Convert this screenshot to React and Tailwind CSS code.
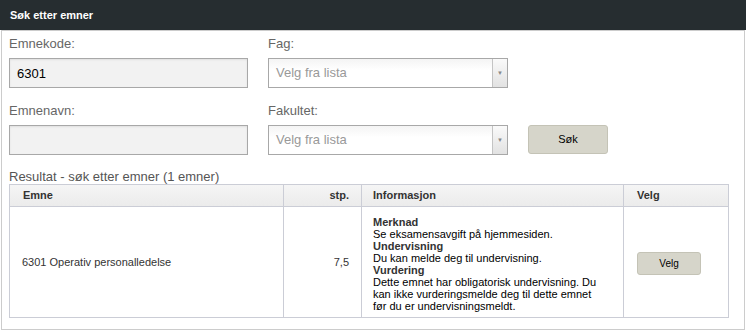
import { useState } from "react";

function Field({ label, children }) {
  return (
    <div className="flex flex-col">
      <label className="text-[13px] leading-[16px] text-[#666] mb-[6px]">{label}</label>
      {children}
    </div>
  );
}

function TextInput({ value }) {
  return (
    <input
      defaultValue={value}
      className="h-[30px] w-[239px] border border-[#a8a8a8] bg-[#f2f2f2] px-[7px] text-[13px] text-black outline-none shadow-[inset_0_1px_2px_rgba(0,0,0,0.08)]"
    />
  );
}

function Select({ placeholder }) {
  return (
    <div className="flex h-[30px] w-[240px] border border-[#a8a8a8] bg-gradient-to-b from-[#f4f4f4] to-white to-[40%]">
      <div className="flex flex-1 items-center px-[7px] text-[13px] text-[#999]">{placeholder}</div>
      <div className="flex w-[15px] items-center justify-center border-l border-[#c4c4c4] bg-gradient-to-b from-[#fafafa] to-[#e2e2e2]">
        <span className="text-[6px] leading-none text-[#888]">▼</span>
      </div>
    </div>
  );
}

export default function App() {
  const [rows] = useState([
    {
      emne: "6301 Operativ personalledelse",
      stp: "7,5",
      info: [
        { title: "Merknad", text: "Se eksamensavgift på hjemmesiden." },
        { title: "Undervisning", text: "Du kan melde deg til undervisning." },
        {
          title: "Vurdering",
          text: "Dette emnet har obligatorisk undervisning. Du kan ikke vurderingsmelde deg til dette emnet før du er undervisningsmeldt.",
        },
      ],
    },
  ]);

  return (
    <div className="h-[330px] w-[746px] bg-white font-['Liberation_Sans',Arial,sans-serif]">
      <div className="flex h-[30px] items-center bg-[#262d30] px-[10px] text-[11px] font-bold text-white">
        Søk etter emner
      </div>
      <div className="ml-px w-[744px] border-x border-b border-t border-[#cccccc] pb-[11px] pl-[7px] pt-[5px]">
        <div className="flex gap-[20px]">
          <Field label="Emnekode:">
            <TextInput value="6301" />
          </Field>
          <Field label="Fag:">
            <Select placeholder="Velg fra lista" />
          </Field>
        </div>
        <div className="mt-[15px] flex items-end gap-[20px]">
          <Field label="Emnenavn:">
            <TextInput value="" />
          </Field>
          <Field label="Fakultet:">
            <Select placeholder="Velg fra lista" />
          </Field>
          <button className="mb-px h-[29px] w-[80px] rounded-[3px] border border-[#c4c3b6] bg-[#d6d5ca] text-[11px] text-black">
            Søk
          </button>
        </div>

        <div className="mt-[14px] text-[13px] leading-[15px] text-[#555]">
          Resultat - søk etter emner (1 emner)
        </div>
        <table className="w-[719px] table-fixed border-collapse text-[11px] text-[#333]">
          <colgroup>
            <col className="w-[274px]" />
            <col className="w-[78px]" />
            <col className="w-[262px]" />
            <col className="w-[105px]" />
          </colgroup>
          <thead>
            <tr className="h-[22px] bg-gradient-to-b from-[#f5f5f5] to-[#ebebeb]">
              <th className="border border-[#cbcdd6] px-[13px] text-left font-bold">Emne</th>
              <th className="border border-[#cbcdd6] px-[12px] text-right font-bold">stp.</th>
              <th className="border border-[#cbcdd6] px-[11px] text-left font-bold">Informasjon</th>
              <th className="border border-[#cbcdd6] px-[13px] text-left font-bold">Velg</th>
            </tr>
          </thead>
          <tbody>
            {rows.map((row, idx) => (
              <tr key={idx}>
                <td className="border border-[#cbcdd6] px-[12px] align-middle">{row.emne}</td>
                <td className="border border-[#cbcdd6] px-[12px] text-right align-middle">{row.stp}</td>
                <td className="border border-[#cbcdd6] pb-[5px] pl-[11px] pr-[21px] pt-[9px] align-top leading-[12px] text-black">
                  {row.info.map((i) => (
                    <div key={i.title}>
                      <div className="font-bold text-[#333]">{i.title}</div>
                      <div>{i.text}</div>
                    </div>
                  ))}
                </td>
                <td className="border border-[#cbcdd6] px-[13px] align-middle">
                  <button className="mt-[3px] h-[23px] w-[64px] rounded-[3px] border border-[#c4c3b6] bg-[#d6d5ca] text-[10px] text-black">
                    Velg
                  </button>
                </td>
              </tr>
            ))}
          </tbody>
        </table>
      </div>
    </div>
  );
}
